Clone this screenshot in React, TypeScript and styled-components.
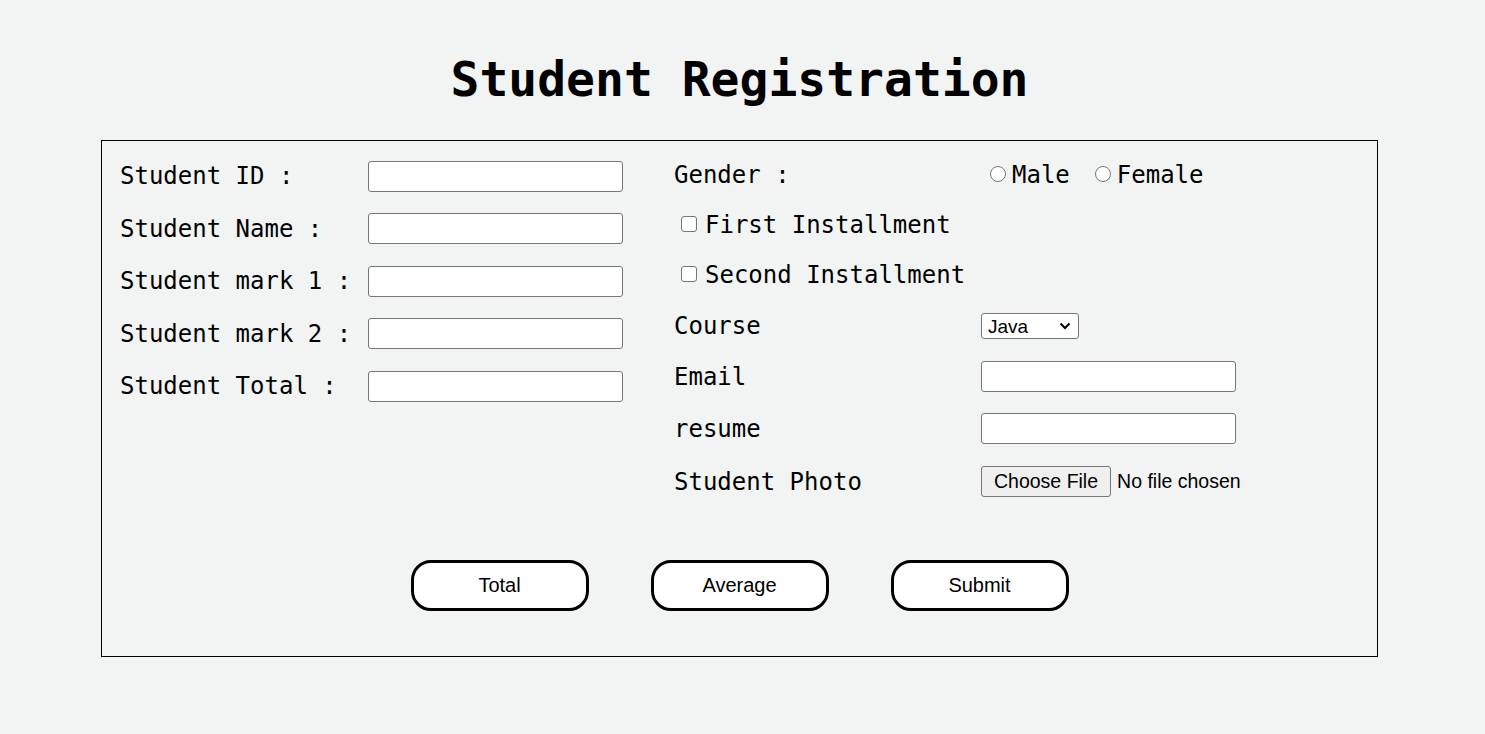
import { FC, Fragment } from "react";
import styled, { createGlobalStyle } from "styled-components";

const GlobalStyle = createGlobalStyle`
  body {
    margin: 0;
    background-color: #f1f4f3;
    color: #000;
    font-family: "DejaVu Sans Mono", "Liberation Mono", monospace;
  }
`;

const Page = styled.div`
  display: flex;
  flex-direction: column;
  align-items: flex-start;
  padding: 51px 0 40px 101px;
`;

const Title = styled.h1`
  margin: 0;
  width: 1277px;
  text-align: center;
  font-size: 48px;
  font-weight: 700;
  line-height: 56px;
`;

const Form = styled.form`
  box-sizing: border-box;
  width: 1277px;
  margin-top: 33px;
  padding: 9px 18px 45px;
  border: 1px solid #000;
`;

const Columns = styled.div`
  display: grid;
  grid-template-columns: 554px 1fr;
  align-items: start;
`;

const LeftTable = styled.div`
  display: grid;
  grid-template-columns: 248px 255px;
  grid-auto-rows: 52.5px;
  align-items: center;
`;

const RightTable = styled.div`
  display: grid;
  grid-template-columns: 307px auto;
  grid-template-rows: 50px 50px 50px 52px 49px 55px 51px;
  align-items: center;
`;

const Label = styled.label`
  font-size: 24px;
  white-space: pre;
`;

const TextInput = styled.input`
  box-sizing: border-box;
  width: 255px;
  height: 31px;
  padding: 0 4px;
  border: 1px solid #767676;
  border-radius: 3px;
  background: #fff;
`;

const RadioGroup = styled.div`
  display: flex;
  align-items: center;
  gap: 16px;
`;

const Option = styled.label`
  display: flex;
  align-items: center;
  font-size: 24px;
`;

const Radio = styled.input.attrs({ type: "radio" })`
  appearance: none;
  box-sizing: border-box;
  width: 16px;
  height: 16px;
  margin: -3px 6px 0 9px;
  border: 1px solid #767676;
  border-radius: 50%;
  background: #fff;

  &:checked {
    border: 4px solid #0075ff;
  }
`;

const CheckRow = styled.label`
  grid-column: 1 / -1;
  display: flex;
  align-items: center;
  font-size: 24px;
`;

const Checkbox = styled.input.attrs({ type: "checkbox" })`
  appearance: none;
  box-sizing: border-box;
  width: 16px;
  height: 16px;
  margin: -3px 8px 0 7px;
  border: 1px solid #767676;
  border-radius: 3px;
  background: #fff;

  &:checked {
    background: #0075ff;
    border-color: #0075ff;
  }
`;

const SelectWrap = styled.div`
  position: relative;
  width: 98px;
  height: 26px;
`;

const Select = styled.select`
  appearance: none;
  box-sizing: border-box;
  width: 98px;
  height: 26px;
  padding: 0 0 0 6px;
  border: 1px solid #767676;
  border-radius: 3px;
  background: #fff;
  color: #000;
  font-family: "Liberation Sans", Arial, sans-serif;
  font-size: 19px;
`;

const Chevron = styled.svg`
  position: absolute;
  right: 8px;
  top: 9px;
  pointer-events: none;
`;

const FileInput = styled.input.attrs({ type: "file" })`
  font-family: "Liberation Sans", Arial, sans-serif;
  font-size: 19.5px;
  color: #000;

  &::file-selector-button {
    height: 31px;
    margin-right: 6px;
    padding: 0 12px;
    border: 1px solid #767676;
    border-radius: 3px;
    background: #efefef;
    font-family: inherit;
    font-size: 19.5px;
    color: #000;
  }
`;

const ButtonRow = styled.div`
  display: flex;
  justify-content: center;
  gap: 62px;
  margin-top: 53px;
`;

const PillButton = styled.button`
  width: 178px;
  height: 51px;
  border: 3px solid #000;
  border-radius: 20px;
  background: #fff;
  color: #000;
  font-family: "Liberation Sans", Arial, sans-serif;
  font-size: 20px;
`;

const leftFields = [
  { id: "sid", label: "Student ID :" },
  { id: "sname", label: "Student Name :" },
  { id: "m1", label: "Student mark 1 :" },
  { id: "m2", label: "Student mark 2 :" },
  { id: "total", label: "Student Total :" },
];

const App: FC = () => (
  <>
    <GlobalStyle />
    <Page>
      <Title>Student Registration</Title>
      <Form onSubmit={(e) => e.preventDefault()}>
        <Columns>
          <LeftTable>
            {leftFields.map((f) => (
              <Fragment key={f.id}>
                <Label htmlFor={f.id}>{f.label}</Label>
                <TextInput id={f.id} type="text" />
              </Fragment>
            ))}
          </LeftTable>
          <RightTable>
            <Label>Gender :</Label>
            <RadioGroup>
              <Option>
                <Radio name="gender" value="male" />
                Male
              </Option>
              <Option>
                <Radio name="gender" value="female" />
                Female
              </Option>
            </RadioGroup>
            <CheckRow>
              <Checkbox />
              First Installment
            </CheckRow>
            <CheckRow>
              <Checkbox />
              Second Installment
            </CheckRow>
            <Label htmlFor="course">Course</Label>
            <SelectWrap>
              <Select id="course" defaultValue="java">
                <option value="java">Java</option>
                <option value="python">Python</option>
                <option value="c">C</option>
              </Select>
              <Chevron width="12" height="8" viewBox="0 0 12 8">
                <path d="M1.5 1.5 6 6l4.5-4.5" fill="none" stroke="#000" strokeWidth="2" />
              </Chevron>
            </SelectWrap>
            <Label htmlFor="email">Email</Label>
            <TextInput id="email" type="email" />
            <Label htmlFor="resume">resume</Label>
            <TextInput id="resume" type="text" />
            <Label htmlFor="photo">Student Photo</Label>
            <div>
              <FileInput id="photo" />
            </div>
          </RightTable>
        </Columns>
        <ButtonRow>
          <PillButton type="button">Total</PillButton>
          <PillButton type="button">Average</PillButton>
          <PillButton type="submit">Submit</PillButton>
        </ButtonRow>
      </Form>
    </Page>
  </>
);

export default App;
